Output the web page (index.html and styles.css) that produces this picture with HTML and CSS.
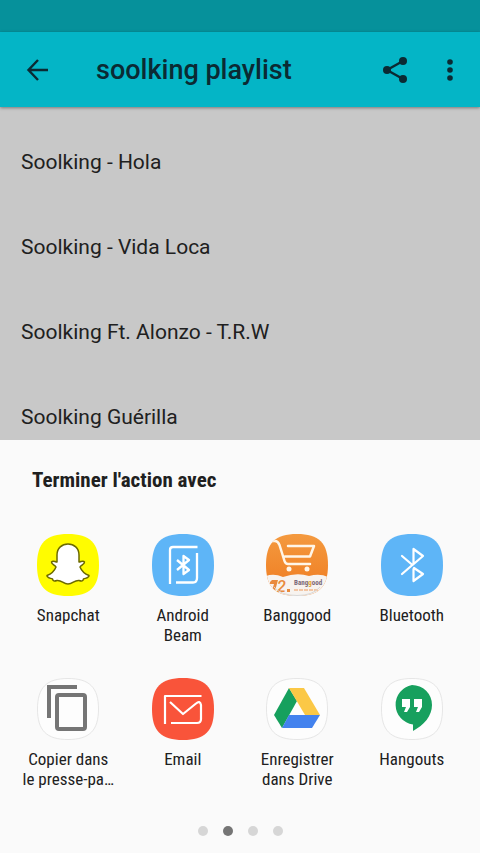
FILE: index.html
```html
<!DOCTYPE html>
<html lang="fr">
<head>
    <meta charset="UTF-8">
    <meta name="viewport" content="width=device-width, initial-scale=1.0">
    <title>soolking playlist</title>
    <link rel="stylesheet" href="styles.css">
</head>
<body>
    <div class="status-bar"></div>
    <header class="toolbar">
        <button class="icon-btn" type="button" aria-label="Retour">
            <svg width="24" height="24" viewBox="0 0 24 24" fill="none" stroke="currentColor" stroke-width="2.4">
                <path d="M22 12H3M12 2L2.5 12L12 22"/>
            </svg>
        </button>
        <h1>soolking playlist</h1>
        <button class="icon-btn" type="button" aria-label="Partager">
            <svg width="26" height="28" viewBox="0 0 26 28" fill="currentColor">
                <path d="M21 5L5 14L21 23" fill="none" stroke="currentColor" stroke-width="2.4"/>
                <circle cx="21" cy="5" r="4"/>
                <circle cx="5" cy="14" r="4"/>
                <circle cx="21" cy="23" r="4"/>
            </svg>
        </button>
        <button class="icon-btn more-btn" type="button" aria-label="Plus d'options">
            <svg width="6" height="22" viewBox="0 0 6 22" fill="currentColor">
                <circle cx="3" cy="3" r="2.8"/>
                <circle cx="3" cy="11" r="2.8"/>
                <circle cx="3" cy="19" r="2.8"/>
            </svg>
        </button>
    </header>

    <ul class="playlist">
        <li>Soolking - Hola</li>
        <li>Soolking - Vida Loca</li>
        <li>Soolking Ft. Alonzo - T.R.W</li>
        <li>Soolking Guérilla</li>
    </ul>

    <section class="share-sheet">
        <h2>Terminer l'action avec</h2>
        <div class="app-grid">
            <button class="app" type="button">
                <svg class="app-icon" viewBox="0 0 62 62">
                    <path fill="#fffc00" d="M31 0C53 0 62 9 62 31S53 62 31 62S0 53 0 31S9 0 31 0Z"/>
                    <path fill="#fff" stroke="#6b6900" stroke-width="1.5" stroke-linejoin="round" d="M31 10C37 10 42 14 42 21L42 28C44 28 46 26 47.500 28C48 30 44 31 43 33C45 38 48 40 52 41.500C52 44 49 44 46.500 45C46 47 45 47.500 42 46.500C37 46 36 50 31 50C26 50 25 46 20 46.500C17 47.500 16 47 15.500 45C13 44 10 44 10 41.500C14 40 17 38 19 33C18 31 14 30 14.500 28C16 26 18 28 20 28L20 21C20 14 25 10 31 10Z"/>
                </svg>
                <span>Snapchat</span>
            </button>
            <button class="app" type="button">
                <svg class="app-icon" viewBox="0 0 62 62" fill="none" stroke="#fff" stroke-width="2.300">
                    <path fill="#5eb5f7" stroke="none" d="M31 0C53 0 62 9 62 31S53 62 31 62S0 53 0 31S9 0 31 0Z"/>
                    <path d="M45.500 13H21Q18 13 18 16V50M24 48.500H41Q45 48.500 45 44V19"/>
                    <path stroke-linejoin="round" d="M25 26L37 36L31.500 40V22L37 26L25 36"/>
                </svg>
                <span>Android Beam</span>
            </button>
            <button class="app" type="button">
                <svg class="app-icon" viewBox="0 0 62 62">
                    <defs>
                        <clipPath id="tile">
                            <path d="M31 0C53 0 62 9 62 31S53 62 31 62S0 53 0 31S9 0 31 0Z"/>
                        </clipPath>
                        <linearGradient id="orange" x1="0" y1="0" x2="0" y2="1">
                            <stop offset="0" stop-color="#f49a3f"/>
                            <stop offset="1" stop-color="#ef7a20"/>
                        </linearGradient>
                    </defs>
                    <g clip-path="url(#tile)">
                        <path fill="url(#orange)" d="M0 0H62V62H0Z"/>
                        <path fill="#f7f3ef" d="M0 42Q8 39 17 43Q31 38 43 42Q54 39 62 43V62H0Z"/>
                        <path fill="none" stroke="#fff6e8" stroke-width="2.500" stroke-linecap="round" stroke-linejoin="round" d="M3 7H9Q12 7 13.500 11L18.500 27Q19.500 30 22 30H44M22 12H48L44 22.500H19"/>
                        <circle cx="23" cy="35" r="2.500" fill="#fff6e8"/>
                        <circle cx="41" cy="35" r="2.500" fill="#fff6e8"/>
                        <path fill="#e98a3c" d="M4 48L6 46H12L9 57H6L8 50L4 50Z"/>
                        <text class="badge-number" x="11" y="58">2</text>
                        <path fill="#e98a3c" d="M21 55h3v3h-3z"/>
                        <text class="badge-name" x="28" y="51">Bang<tspan fill="#e3a02c">g</tspan>ood</text>
                        <path stroke="#ef9a5a" stroke-width="1.200" stroke-dasharray="4 1" d="M28 56H53"/>
                    </g>
                    <path fill="none" stroke="#d8d8d8" d="M8 53Q15 61.500 31 61.500T54 53"/>
                </svg>
                <span>Banggood</span>
            </button>
            <button class="app" type="button">
                <svg class="app-icon" viewBox="0 0 62 62" fill="none" stroke="#fff" stroke-width="2.200">
                    <path fill="#5eb5f7" stroke="none" d="M31 0C53 0 62 9 62 31S53 62 31 62S0 53 0 31S9 0 31 0Z"/>
                    <path stroke-linejoin="round" stroke-linecap="round" d="M21 22L31.500 31L42 22L32.500 15V30L21 40M33 34L42 40L32.500 47V35"/>
                </svg>
                <span>Bluetooth</span>
            </button>
            <button class="app" type="button">
                <svg class="app-icon" viewBox="0 0 62 62" fill="none" stroke="#757575" stroke-width="4">
                    <path class="white-tile" d="M31 .5C52.500 .5 61.500 9.500 61.500 31S52.500 61.500 31 61.500S.5 52.500 .5 31S9.500 .5 31 .5Z"/>
                    <path d="M12 40V9H40"/>
                    <rect x="20" y="17" width="28" height="34" rx="2"/>
                </svg>
                <span>Copier dans le presse-pa…</span>
            </button>
            <button class="app" type="button">
                <svg class="app-icon" viewBox="0 0 62 62" fill="none" stroke="#fff" stroke-width="2.200">
                    <path fill="#f9543a" stroke="none" d="M31 0C53 0 62 9 62 31S53 62 31 62S0 53 0 31S9 0 31 0Z"/>
                    <path stroke-linejoin="round" d="M49.500 18H13V46M19 45H45Q49 45 49 41V27Q48 22 44 25.500L31 36L18 24"/>
                </svg>
                <span>Email</span>
            </button>
            <button class="app" type="button">
                <svg class="app-icon" viewBox="0 0 62 62">
                    <path class="white-tile" d="M31 .5C52.500 .5 61.500 9.500 61.500 31S52.500 61.500 31 61.500S.5 52.500 .5 31S9.500 .5 31 .5Z"/>
                    <path fill="#16a05d" d="M23 10L31 23L16 50L8 37Z"/>
                    <path fill="#fbc846" d="M23 10H38L54 37H39Z"/>
                    <path fill="#4382ee" d="M23 37H54L46 50H16Z"/>
                </svg>
                <span>Enregistrer dans Drive</span>
            </button>
            <button class="app" type="button">
                <svg class="app-icon" viewBox="0 0 62 62">
                    <path class="white-tile" d="M31 .5C52.500 .5 61.500 9.500 61.500 31S52.500 61.500 31 61.500S.5 52.500 .5 31S9.500 .5 31 .5Z"/>
                    <path fill="#17a05e" d="M31 7A20 20 0 0 1 51 27C51 38 43 47 32 53V46.500A20 20 0 0 1 31 7Z"/>
                    <path fill="#fff" d="M21 21H29V29L26 34H23L25 29H21ZM33 21H41V29L38 34H35L37 29H33Z"/>
                </svg>
                <span>Hangouts</span>
            </button>
        </div>
        <div class="page-dots">
            <span class="dot"></span>
            <span class="dot active"></span>
            <span class="dot"></span>
            <span class="dot"></span>
        </div>
    </section>
</body>
</html>
```

FILE: styles.css
```css
* {
    box-sizing: border-box;
}

body {
    margin: 0;
    min-height: 100vh;
    background-color: #c8c8c8;
    color: #202020;
    font-family: Roboto, sans-serif;
}

button {
    padding: 0;
    border: none;
    background: none;
    color: inherit;
    font-family: inherit;
    cursor: pointer;
}

.status-bar {
    height: 32px;
    background-color: #06919b;
}

.toolbar {
    display: flex;
    align-items: center;
    height: 75px;
    padding: 0 16px 0 14px;
    background-color: #04b5c6;
    color: #0b2a33;
    box-shadow: 0 1px 3px rgba(0, 0, 0, 0.4);
}

.toolbar h1 {
    flex: 1;
    margin: 0 0 0 34px;
    font-size: 27px;
    font-weight: 500;
    line-height: 32px;
}

.icon-btn {
    display: flex;
    align-items: center;
    justify-content: center;
    width: 48px;
    height: 48px;
}

.more-btn {
    width: 28px;
    margin-left: 17px;
}

.playlist {
    margin: 0;
    padding: 13px 21px 0;
    list-style: none;
}

.playlist li {
    font-size: 21px;
    line-height: 85px;
}

.share-sheet {
    position: fixed;
    left: 0;
    right: 0;
    bottom: 0;
    padding: 28px 11px 17px;
    background-color: #fafafa;
    font-family: "Roboto Condensed", Roboto, sans-serif;
}

.share-sheet h2 {
    margin: 0 21px 42px;
    font-size: 21px;
    font-weight: 700;
    line-height: 24px;
}

.app-grid {
    display: grid;
    grid-template-columns: repeat(4, 1fr);
    row-gap: 33px;
}

.app {
    display: flex;
    flex-direction: column;
    align-items: center;
    gap: 9px;
    padding: 0 11px;
    font-size: 17px;
    line-height: 20px;
}

.app-icon {
    width: 62px;
    height: 62px;
}

.white-tile {
    fill: #fdfdfd;
    stroke: #e6e6e6;
    stroke-width: 1px;
}

.badge-number {
    fill: #e98a3c;
    font-family: Roboto, sans-serif;
    font-size: 16px;
    font-style: italic;
    font-weight: 500;
}

.badge-name {
    fill: #7b6a78;
    font-size: 7px;
    font-weight: 700;
}

.page-dots {
    display: flex;
    justify-content: center;
    gap: 15px;
    margin-top: 37px;
}

.dot {
    width: 10px;
    height: 10px;
    border-radius: 50%;
    background-color: #d6d6d6;
}

.dot.active {
    background-color: #757575;
}
```
